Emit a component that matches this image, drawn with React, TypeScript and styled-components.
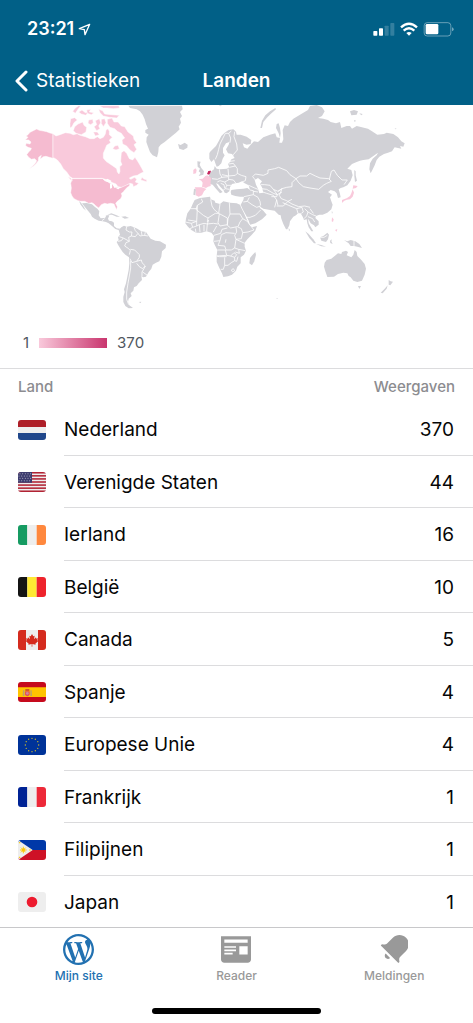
import React from "react";
import styled, { createGlobalStyle } from "styled-components";

const GlobalStyle = createGlobalStyle`
  *, *::before, *::after { box-sizing: border-box; }
  body {
    margin: 0;
    background: #fff;
    color: #060606;
    font-family: Inter, "Liberation Sans", sans-serif;
  }
`;

const Screen = styled.div`
  display: flex;
  flex-direction: column;
  min-height: 100vh;
`;

const Header = styled.header`
  background: #016087;
  color: #fff;
`;

const StatusBar = styled.div`
  display: flex;
  align-items: center;
  justify-content: space-between;
  height: 56px;
  padding: 2px 19px 0 27px;
`;

const Clock = styled.div`
  display: flex;
  align-items: center;
  gap: 4px;
  font-size: 18px;
  line-height: 24px;
  font-weight: 600;
`;

const NavBar = styled.nav`
  display: grid;
  grid-template-columns: 1fr auto 1fr;
  align-items: center;
  height: 49px;
  padding: 0 14px;
`;

const BackButton = styled.button`
  display: flex;
  align-items: center;
  gap: 8px;
  justify-self: start;
  padding: 0;
  border: 0;
  background: none;
  color: inherit;
  font: inherit;
  font-size: 19px;
  line-height: 24px;
  cursor: pointer;
`;

const Title = styled.h1`
  margin: 0;
  font-size: 19px;
  line-height: 24px;
  font-weight: 600;
`;

const MapSection = styled.section`
  padding-bottom: 15px;
  border-bottom: 1px solid #dcdcde;
`;

const MapDrawing = styled.svg`
  display: block;
  width: 100%;
  height: auto;
`;

const Legend = styled.div`
  display: flex;
  align-items: center;
  gap: 10px;
  margin-top: 18px;
  padding-left: 23px;
  color: #50575e;
  font-size: 15px;
  line-height: 20px;
`;

const LegendBar = styled.span`
  width: 68px;
  height: 10px;
  background: linear-gradient(to right, #f9c9db, #c9356e);
`;

const DataTable = styled.table`
  width: 100%;
  border-spacing: 0;
`;

const HeadCell = styled.th<{ $end?: boolean }>`
  height: 34px;
  padding: 2px 18px 0;
  color: #8c8c90;
  font-size: 15px;
  line-height: 20px;
  font-weight: 500;
  text-align: ${(p) => (p.$end ? "right" : "left")};
`;

const Row = styled.tr`
  height: 52px;
  &:nth-child(odd) { height: 53px; }
`;

const FlagCell = styled.td`
  width: 64px;
  padding: 0 0 0 18px;
`;

const NameCell = styled.th`
  padding: 2px 0 0;
  border-bottom: 1px solid #dcdcde;
  font-size: 19px;
  line-height: 24px;
  font-weight: 400;
  text-align: left;
`;

const ValueCell = styled.td`
  padding: 2px 19px 0 0;
  border-bottom: 1px solid #dcdcde;
  font-size: 19px;
  line-height: 24px;
  text-align: right;
`;

const FlagSvg = styled.svg`
  display: block;
  width: 28px;
  height: 20px;
  border-radius: 3px;
`;

const Footer = styled.footer`
  border-top: 1px solid #c8c8ca;
  margin-top: -1px;
  padding-bottom: 9px;
  background: #fff;
`;

const TabList = styled.nav`
  display: grid;
  grid-template-columns: repeat(3, 1fr);
`;

const Tab = styled.button<{ $active?: boolean }>`
  display: flex;
  flex-direction: column;
  align-items: center;
  gap: 3px;
  padding: 5px 0 0;
  border: 0;
  background: none;
  color: ${(p) => (p.$active ? "#2271b1" : "#999")};
  font: inherit;
  font-size: 12px;
  line-height: 16px;
  font-weight: 500;
  cursor: pointer;
`;

const IconSlot = styled.span`
  display: flex;
  align-items: center;
  height: 32px;
`;

const HomeIndicator = styled.div`
  width: 169px;
  height: 6px;
  margin: 24px auto 0;
  border-radius: 3px;
  background: #000;
`;

const GREY = "#d1d1d6";
const PINK = "#f9c9db";
const ROSE = "#f5bbd0";

type Region = { at: [number, number]; fill: string; shapes: string[]; borders?: string[] };

// Each region is drawn on its own sheet at three units per map unit.
const regions: Region[] = [
  {
    at: [20, 100],
    fill: ROSE,
    shapes: [
      "M16,120 26,120 33,126 30,132 18,130 17,137 24,142 34,145 32,150 26,156 20,164 26,172 34,178 44,176 50,182 46,190 38,198 28,206 40,199 48,191 55,182 56,172 64,166 60,178 70,170 78,169 88,172 99,175 99,101 90,99 80,95 70,93 58,91 50,87 38,93 30,97 24,104 18,108 24,112Z",
      "M157,236 248,236 254,242 262,244 270,250 280,254 284,262 300,264 312,256 324,252 330,250 328,258 322,262 314,270 310,276 304,280 306,288 302,296 292,304 287,310 292,320 290,329 286,322 282,312 272,310 262,312 254,310 244,314 236,324 228,318 222,312 216,308 206,310 194,304 182,304 174,302 162,296 156,288 152,278 154,264 152,250Z",
    ],
  },
  {
    at: [20, 100],
    fill: PINK,
    shapes: [
      "M99,101 108,108 120,104 136,98 150,100 160,104 172,101 180,106 196,110 210,116 222,116 232,110 240,116 250,112 256,102 258,90 264,86 268,94 268,104 277,112 268,120 272,128 260,136 256,146 250,160 250,174 258,184 270,192 282,200 290,206 292,216 297,222 300,214 299,200 306,194 302,184 303,170 304,158 312,152 320,160 328,176 338,180 345,172 352,182 358,192 366,206 371,216 362,220 352,226 340,228 328,234 332,238 344,232 350,238 346,246 356,250 350,256 340,260 338,252 330,250 318,256 304,262 294,260 288,252 278,248 262,240 246,235 158,235 150,230 140,216 130,206 122,192 112,180 104,175 99,173Z",
      "M362,240 366,232 372,237 380,239 380,245 372,243Z",
      "M144,230 152,234 157,242 150,238Z",
      "M152,56 164,53 172,60 162,68 156,80 150,84 150,70Z",
      "M164,80 174,72 188,66 192,76 200,82 198,96 184,104 168,100 160,92Z",
      "M158,34 166,24 176,17 182,18 174,28 166,40Z",
      "M176,36 186,30 196,38 204,36 198,46 184,42Z",
      "M200,30 212,28 208,36 222,38 214,44 202,40Z",
      "M238,17 296,17 299,24 280,26 262,24 250,24Z",
      "M236,28 248,32 254,42 274,44 298,46 290,54 268,52 250,48 240,38Z",
      "M206,60 218,58 220,68 212,74 204,70Z",
      "M226,62 238,56 242,68 236,78 240,86 230,92 222,80 230,74Z",
      "M244,58 254,56 258,68 250,80 244,70Z",
      "M220,96 232,96 238,104 226,108Z",
      "M262,58 276,54 282,66 294,66 304,78 314,80 324,96 340,108 342,118 350,128 342,134 350,148 342,158 330,150 320,138 308,132 306,120 314,114 304,100 292,94 284,86 270,82 262,70Z",
      "M284,138 294,136 298,146 288,150 278,146Z",
    ],
  },
  {
    at: [60, 200],
    fill: GREY,
    shapes: [
      "M66,10 80,9 96,13 104,20 112,26 118,34 116,46 122,55 134,54 138,46 148,46 144,56 147,62 156,64 162,68 162,78 170,85 180,86 176,90 166,87 156,78 146,70 138,66 128,64 116,62 104,56 96,50 92,42 82,30 74,20Z",
      "M57,3 63,8 70,18 78,32 70,25 62,14Z",
      "M142,44 154,40 168,45 180,50 170,50 156,44Z",
      "M184,50 196,49 207,54 194,56Z",
      "M176,90 184,82 192,77 200,80 212,78 222,82 232,86 244,94 258,96 266,108 272,116 286,122 300,124 318,134 317,144 306,154 304,170 298,184 288,188 278,194 274,206 266,216 258,230 250,232 244,228 246,240 236,250 230,258 222,262 220,272 212,280 215,288 206,296 204,306 208,316 219,324 206,325 196,318 190,306 190,290 194,276 192,268 198,250 202,230 206,210 208,190 207,172 196,164 188,156 180,144 174,134 170,126 176,120 174,112 180,104Z",
      "M236,306 244,305 242,309Z",
      "M404,0 420,-6 450,-10 452,-2 464,2 466,8 480,12 490,4 510,8 530,10 540,14 544,24 552,40 560,58 568,74 576,82 591,78 586,92 574,106 562,118 554,128 554,140 558,152 552,164 542,172 542,190 532,200 528,212 516,224 504,229 490,231 486,220 478,204 470,186 470,168 472,150 464,134 460,124 462,108 454,98 440,94 424,98 408,98 394,90 384,80 376,70 378,56 382,40 392,26 398,12Z",
      "M570,174 578,164 586,156 588,164 583,184 576,196 568,190Z",
    ],
    borders: [
      "M200,80 198,90 208,96 216,96 214,108 206,112 208,124M174,124 184,122 190,114 178,110M190,114 208,124 198,128 194,138 206,146 211,152 208,164M211,148 224,150 238,164 238,172 230,184 216,188 210,176M230,184 244,180 246,188 256,198 248,206 238,200 230,190M256,198 252,206 246,216 246,228M248,216 262,226M212,182 212,204 208,228 204,250 200,276 200,298 206,314M214,108 226,110 234,100 226,92 222,82M234,100 240,108 252,106 264,108M244,94 246,106M256,96 254,106M138,46 134,54M126,62 134,56",
      "M392,26 412,26 412,16 428,6 424,-4M412,16 408,28 430,46 444,54 442,66M412,26 410,64 384,60M444,54 466,40 476,40M452,-2 456,18 462,28 476,40 480,12M476,40 502,54 502,74 480,78 474,68 478,42M508,8 510,42 540,42M510,42 504,56 502,76 512,84 532,80 544,86M540,42 548,56 540,66 534,80M548,56 562,64 574,80 582,90 564,96 548,98M544,86 548,98 544,116 528,118 524,106 530,96 528,82M376,66 394,70 398,82 390,86M394,70 410,64 410,78 398,82M410,78 418,74 420,96M418,74 432,70 442,72 440,94M442,72 460,70 474,72M442,72 446,60M408,98 406,86M432,74 432,94M460,96 470,78M462,106 482,100 486,88 502,84M462,124 480,122 484,104 498,98 524,100M480,122 474,136 494,138 498,150 514,150 524,144 528,118 554,130M472,150 496,150 500,166 470,168 478,170 500,170M500,166 512,168 522,158 530,164 524,172 512,168M524,144 536,148 556,152M536,148 538,160 526,156M494,172 494,196 504,196 514,188 524,182 524,172M494,196 490,208 482,208M524,182 530,184 534,170M514,210 520,206 524,212 518,216 514,210M496,128 498,118",
    ],
  },
  {
    at: [130, 100],
    fill: GREY,
    shapes: [
      "M-5,17 156,17 158,28 150,36 156,48 150,56 153,68 146,80 149,88 138,98 126,108 114,118 104,126 92,134 86,142 85,156 81,172 68,166 60,156 54,140 49,126 50,112 56,104 46,98 46,90 54,86 48,72 44,58 38,44 30,34 20,28 0,24Z",
      "M144,132 152,135 164,128 173,134 172,143 160,150 148,146Z",
      "M202,184 212,185 209,194 214,204 222,214 220,224 206,228 212,219 206,214 210,206 203,200Z",
      "M240,156 248,148 258,138 266,124 274,108 284,98 296,90 310,88 318,95 320,104 332,104 350,110 364,120 362,132 350,134 338,130 342,142 352,146 362,134 372,124 384,126 400,112 420,104 436,100 440,112 450,114 446,100 438,84 440,72 446,70 450,84 452,100 448,128 456,128 460,118 458,90 464,76 474,78 480,66 490,56 500,50 520,38 534,30 540,18 560,15 576,22 584,34 576,48 564,54 580,56 594,60 602,66 618,70 630,66 634,84 650,78 660,78 666,86 680,78 696,82 714,86 726,94 742,104 762,102 770,98 790,102 804,112 814,124 824,130 820,140 810,138 814,146 804,144 794,142 786,154 774,158 762,162 748,170 740,180 734,196 726,212 722,220 718,208 720,190 728,176 740,166 744,158 730,168 716,178 700,180 690,182 680,186 666,192 658,200 652,206 664,210 668,226 662,242 652,256 640,262 632,264 626,268 630,282 632,292 624,294 620,280 614,274 602,270 594,276 606,284 600,292 604,304 608,314 604,328 592,338 578,344 568,344 558,348 556,354 566,364 566,374 556,382 552,376 542,370 538,362 534,356 536,370 542,380 550,394 544,394 536,382 532,370 530,358 522,360 518,350 512,340 504,340 498,346 490,350 480,364 478,376 472,388 468,388 460,372 454,356 452,346 446,344 440,338 434,332 420,330 408,328 400,326 390,320 386,314 390,324 400,332 410,344 396,358 376,370 360,374 356,362 348,346 338,328 332,314 340,300 342,290 330,290 316,288 304,284 302,276 304,270 320,268 340,266 352,264 360,270 356,256 344,250 336,244 326,248 316,250 306,252 300,262 298,274 290,280 284,278 280,270 272,262 264,252 258,250 266,264 278,276 270,280 258,266 248,254 240,252 236,230 238,222 246,212 252,208 254,198 260,206 270,208 290,206 298,202 294,192 300,186 304,178 314,174 306,162 294,160 288,148 296,134 298,126 288,130 279,144 279,158 284,166 278,176 274,190 266,198 260,200 256,190 252,178 244,186 238,176 238,160Z",
      "M391,84 396,62 406,46 420,34 436,24 438,28 422,42 412,52 400,66 396,84Z",
      "M266,16 276,16 271,19Z",
      "M660,34 672,30 684,34 680,44 664,46Z",
      "M688,40 698,42 694,46Z",
      "M672,60 678,62 674,66Z",
      "M794,85 800,86 796,88Z",
      "M673,210 677,214 677,226 681,242 675,246 673,228Z",
      "M192,266 198,268 196,286 190,284Z",
    ],
    borders: [
      "M304,93 296,100 286,100 278,116 270,132 266,148 262,164 256,178M296,100 302,114 300,128M314,95 312,110 320,132 322,150 310,164 302,178",
      "M268,208 270,222 276,232 262,238 246,236M294,206 296,228 276,224M276,232 296,230 296,240 284,246 270,242 262,246M296,228 316,226 322,220 334,226 348,230 346,242 336,246M298,202 316,198 322,206 322,220M296,192 310,190 316,198M300,184 314,182M296,238 310,240 318,250M284,246 290,256 304,256M290,256 286,266 298,268M286,266 280,270M272,250 282,254 284,264",
      "M356,256 374,264 384,268M360,270 370,272 370,284 342,290M370,284 384,292 390,304 392,316M358,292 352,304 340,306M352,304 366,314 380,322 392,318M370,274 384,276M348,352 360,352 376,346 384,338 392,330",
      "M398,276 410,280 430,286 440,300 444,316M440,300 434,322M440,318 460,318 474,304 486,298",
      "M376,240 368,230 376,222 400,226 414,220 414,210 434,206 446,202 470,212 480,224 498,236 486,248 486,260 470,262 456,266 444,274 430,268 420,256 404,254 392,254",
      "M498,236 510,228 530,228 540,220 556,228 570,234 596,236 604,244 590,250 580,256 566,268 540,264 520,260 506,248ZM598,238 604,214 612,210 622,226 636,240 652,240 642,254",
      "M394,266 410,268 430,280 442,284 456,276M430,268 442,284 440,290 424,290M444,274 456,266 448,286 454,296 470,302 486,312 506,320 524,318 540,322",
      "M458,308 476,316 500,326 516,322 520,336 514,340M500,326 504,340M524,326 534,336 530,348 522,356M534,336 548,344 558,348M540,326 550,340M534,350 548,356 554,366",
    ],
  },
  {
    at: [130, 100],
    fill: "#fff",
    shapes: ["M374,240 384,234 396,244 390,252 396,262 400,278 388,280 384,266 378,254Z"],
  },
  {
    at: [20, 100],
    fill: "#fff",
    shapes: ["M254,242 262,236 274,242 270,248 262,246Z", "M270,252 277,250 276,264 270,266Z", "M280,250 290,256 284,264 279,256Z", "M288,266 300,260 296,268Z"],
  },
  {
    at: [130, 100],
    fill: PINK,
    shapes: [
      "M190,210 196,205 200,210 198,220 190,222Z",
      "M206,238 218,236 226,228 232,226 244,234 242,244 242,258 234,260 228,264 216,260 218,248 214,242Z",
      "M194,262 216,262 229,267 222,274 216,286 206,290 197,286 198,270Z",
      "M670,256 683,258 678,264 668,266Z",
      "M668,268 672,278 668,290 660,298 650,299 640,304 636,308 636,300 650,295 660,288 664,280Z",
      "M606,352 611,358 609,366 605,364Z",
      "M615,390 622,387 620,395Z",
      "M636,300 641,304 637,308Z",
    ],
  },
  {
    at: [130, 100],
    fill: "#c5265f",
    shapes: ["M231,222 235,213 243,212 241,219 237,224Z"],
  },
  {
    at: [240, 200],
    fill: GREY,
    shapes: [
      "M146,84 150,90 147,94Z",
      "M196,94 206,102 220,118 228,130 222,130 208,114Z",
      "M228,132 244,135 258,140 244,139Z",
      "M240,112 250,108 262,98 267,104 264,118 258,126 244,122Z",
      "M270,122 276,118 274,124 278,132 271,129Z",
      "M275,34 278,36 276,42Z",
      "M312,120 322,124 332,120 346,124 358,132 366,144 352,140 342,138 332,138 326,130Z",
      "M254,188 260,180 274,176 284,168 294,160 304,162 306,156 318,152 324,156 320,166 334,172 340,164 344,150 350,156 352,168 362,178 374,192 378,206 374,224 366,242 352,246 340,242 332,232 326,228 322,220 310,218 294,222 282,230 262,231 256,214 252,200Z",
      "M354,258 363,258 358,267Z",
      "M446,240 452,244 459,245 451,256 446,254Z",
      "M443,256 440,266 428,280 422,278 434,266Z",
      "M109,294 114,295 111,297Z",
    ],
    borders: ["M342,120 342,138M240,112 252,112 262,106"],
  },
];

const WorldMap = () => (
  <MapDrawing viewBox="0 105 473 210" role="img" aria-label="Wereldkaart">
    {regions.map((r, i) => (
      <g key={i} transform={`translate(${r.at[0]} ${r.at[1]}) scale(0.33333)`}>
        {r.shapes.map((d) => (
          <path key={d} d={d} fill={r.fill} stroke={i < 2 ? "#fff" : "none"} strokeWidth="1.5" strokeLinejoin="round" />
        ))}
        {r.borders?.map((d) => (
          <path key={d} d={d} fill="none" stroke="#fff" strokeWidth="2.4" strokeLinejoin="round" />
        ))}
      </g>
    ))}
  </MapDrawing>
);

const stripesV = (a: string, b: string, c: string) => (
  <>
    <path fill={a} d="M0 0h28v60H0z" />
    <path fill={b} d="M28 0h28v60H28z" />
    <path fill={c} d="M56 0h28v60H56z" />
  </>
);

const flags: Record<string, React.ReactNode> = {
  nl: (
    <>
      <path fill="#ae1f28" d="M0 0h84v21H0z" />
      <path fill="#eee" d="M0 21h84v18H0z" />
      <path fill="#20478b" d="M0 39h84v21H0z" />
    </>
  ),
  us: (
    <>
      <path fill="#eee" d="M0 0h84v60H0z" />
      {[0, 1, 2, 3, 4, 5, 6].map((n) => (
        <rect key={n} y={n * 9.23} width="84" height="4.62" fill="#b22334" />
      ))}
      <path fill="#3c3b6e" d="M0 0h42v32H0z" />
      {[5, 12, 19, 26].map((y, r) =>
        [6, 14, 22, 30, 38].map((x) => (
          <circle key={`${x}-${y}`} cx={r % 2 ? x - 3 : x} cy={y} r="1.5" fill="#c9c9d8" />
        ))
      )}
    </>
  ),
  ie: stripesV("#169b62", "#eee", "#ff883e"),
  be: stripesV("#141414", "#fee833", "#ee232c"),
  ca: (
    <>
      <path fill="#eee" d="M0 0h84v60H0z" />
      <path fill="#d52b1e" d="M0 0h24v60H0zM60 0h24v60H60z" />
      <path
        fill="#d52b1e"
        d="M42 12l4 7 4-2-2 11 6-6 1 4 5-1-2 6 3 2-9 8 1 3-10-2v8h-2v-8l-10 2 1-3-9-8 3-2-2-6 5 1 1-4 6 6-2-11 4 2z"
      />
    </>
  ),
  es: (
    <>
      <path fill="#c60a1d" d="M0 0h84v60H0z" />
      <path fill="#ffc400" d="M0 16h84v29H0z" />
      <path fill="#bda16a" d="M15 25h4v17h-5zM37 25h4l1 17h-5z" />
      <path fill="#e45058" d="M21 28h14v9q-2 6-7 6t-7-6z" />
      <path fill="#c43a30" d="M22 22h12v4H22z" />
      <circle cx="28" cy="34" r="4" fill="#c98aa0" />
    </>
  ),
  eu: (
    <>
      <path fill="#039" d="M0 0h84v60H0z" />
      {Array.from({ length: 12 }, (_, n) => (
        <circle
          key={n}
          cx={42 + 20 * Math.sin((n * Math.PI) / 6)}
          cy={30 - 20 * Math.cos((n * Math.PI) / 6)}
          r="2"
          fill="#d8c026"
        />
      ))}
    </>
  ),
  fr: stripesV("#002395", "#eee", "#ed2939"),
  ph: (
    <>
      <path fill="#0038a8" d="M0 0h84v30H0z" />
      <path fill="#ce1126" d="M0 30h84v30H0z" />
      <path fill="#eee" d="M0 0l44 30L0 60z" />
      <path stroke="#fcd116" strokeWidth="3" d="M16 20v20M6 30h20M9 23l14 14M23 23L9 37" />
      <circle cx="16" cy="30" r="5" fill="#fcc40a" />
      <path fill="#fcd116" d="M3 6h4v4H3zM3 50h4v4H3zM34 28h4v4h-4z" />
    </>
  ),
  jp: (
    <>
      <path fill="#eee" d="M0 0h84v60H0z" />
      <circle cx="42" cy="30" r="16" fill="#ed1b2f" />
    </>
  ),
};

const countries = [
  { code: "nl", name: "Nederland", views: 370 },
  { code: "us", name: "Verenigde Staten", views: 44 },
  { code: "ie", name: "Ierland", views: 16 },
  { code: "be", name: "België", views: 10 },
  { code: "ca", name: "Canada", views: 5 },
  { code: "es", name: "Spanje", views: 4 },
  { code: "eu", name: "Europese Unie", views: 4 },
  { code: "fr", name: "Frankrijk", views: 1 },
  { code: "ph", name: "Filipijnen", views: 1 },
  { code: "jp", name: "Japan", views: 1 },
];

const LocationIcon = () => (
  <svg width="13" height="13" viewBox="0 0 39 39" fill="none" stroke="#fff" strokeWidth="4" strokeLinejoin="round" aria-hidden="true">
    <path d="M35 4L4 17l15 3 2 15z" />
  </svg>
);

const StatusIcons = () => (
  <svg width="81" height="15" viewBox="1118 63 243 45" aria-hidden="true">
    <g fill="#fff">
      <rect x="1119" y="90" width="12" height="14" rx="2" />
      <rect x="1136" y="82" width="12" height="22" rx="2" />
      <rect x="1153" y="74" width="12" height="30" rx="2" opacity=".2" />
      <rect x="1170" y="66" width="12" height="38" rx="2" opacity=".2" />
      <rect x="1276" y="69" width="38" height="31" rx="4" />
      <path d="M1355 79q5 2 5 6t-5 6z" opacity=".45" />
      <path d="M1226 104l-8-8q8-6 16 0z" />
    </g>
    <rect x="1271.5" y="65" width="80" height="40" rx="9" fill="none" stroke="#fff" strokeWidth="3" opacity=".4" />
    <path d="M1202 79q24-22 48 0M1210 89q16-14 32 0" fill="none" stroke="#fff" strokeWidth="7" />
  </svg>
);

const BackIcon = () => (
  <svg width="14" height="22" viewBox="0 0 14 22" fill="none" stroke="#fff" strokeWidth="3" strokeLinecap="round" strokeLinejoin="round" aria-hidden="true">
    <path d="M12 2L3 11l9 9" />
  </svg>
);

const SiteIcon = () => (
  <svg width="31" height="31" viewBox="2 2 20 20" fill="currentColor" aria-hidden="true">
    <path d="M12 2C6.477 2 2 6.477 2 12s4.477 10 10 10 10-4.477 10-10S17.523 2 12 2zM3.5 12c0-1.232.264-2.402.736-3.46L8.29 19.65C5.456 18.272 3.5 15.365 3.5 12zm8.5 8.5c-.834 0-1.64-.12-2.4-.345l2.55-7.41 2.613 7.157c.017.042.038.08.06.117-.884.31-1.833.48-2.823.48zm1.172-12.485c.512-.027.973-.08.973-.08.458-.055.404-.728-.054-.702 0 0-1.376.108-2.265.108-.835 0-2.24-.107-2.24-.107-.458-.026-.51.674-.053.7 0 0 .434.055.892.082l1.324 3.63-1.86 5.578-3.096-9.208c.512-.027.973-.08.973-.08.458-.055.403-.728-.055-.702 0 0-1.376.108-2.265.108-.16 0-.347-.003-.547-.01C6.418 5.025 9.03 3.5 12 3.5c2.213 0 4.228.846 5.74 2.232-.037-.002-.072-.007-.11-.007-.835 0-1.427.727-1.427 1.51 0 .7.404 1.292.835 1.993.323.566.7 1.293.7 2.344 0 .727-.28 1.572-.646 2.748l-.848 2.833-3.072-9.138zm3.1 11.332l2.597-7.506c.484-1.212.645-2.18.645-3.044 0-.313-.02-.603-.057-.874.664 1.21 1.042 2.6 1.042 4.078 0 3.136-1.7 5.874-4.227 7.347z" />
  </svg>
);

const ReaderIcon = () => (
  <svg width="30" height="27" viewBox="3 4 18 16" fill="currentColor" aria-hidden="true">
    <path d="M3 4v14c0 1.1.9 2 2 2h14c1.1 0 2-.9 2-2V4H3zm7 11H5v-1h5v1zm2-2H5v-1h7v1zm0-2H5v-1h7v1zm7 4h-5v-5h5v5zm0-7H5V6h14v2z" />
  </svg>
);

const BellIcon = () => (
  <svg width="28" height="28" viewBox="3 3 17 18" fill="currentColor" aria-hidden="true">
    <path d="M6.14 14.97l2.828 2.827c-.362.362-.862.586-1.414.586-1.105 0-2-.895-2-2 0-.552.224-1.052.586-1.414zm8.867 5.324L14.3 21 3 9.7l.706-.707 1.102.157c.754.108 1.69-.122 2.077-.51l3.885-3.884c2.34-2.34 6.135-2.34 8.475 0s2.34 6.135 0 8.475l-3.885 3.886c-.388.388-.618 1.323-.51 2.077l.157 1.1z" />
  </svg>
);

export default function App() {
  return (
    <>
      <GlobalStyle />
      <Screen>
        <Header>
          <StatusBar>
            <Clock>
              23:21
              <LocationIcon />
            </Clock>
            <StatusIcons />
          </StatusBar>
          <NavBar>
            <BackButton type="button">
              <BackIcon />
              Statistieken
            </BackButton>
            <Title>Landen</Title>
          </NavBar>
        </Header>
        <main>
          <MapSection>
            <WorldMap />
            <Legend>
              <span>1</span>
              <LegendBar />
              <span>370</span>
            </Legend>
          </MapSection>
          <DataTable>
            <thead>
              <tr>
                <HeadCell scope="col" colSpan={2}>Land</HeadCell>
                <HeadCell scope="col" $end>Weergaven</HeadCell>
              </tr>
            </thead>
            <tbody>
              {countries.map((c) => (
                <Row key={c.code}>
                  <FlagCell>
                    <FlagSvg viewBox="0 0 84 60" preserveAspectRatio="none" aria-hidden="true">
                      {flags[c.code]}
                    </FlagSvg>
                  </FlagCell>
                  <NameCell scope="row">{c.name}</NameCell>
                  <ValueCell>{c.views}</ValueCell>
                </Row>
              ))}
            </tbody>
          </DataTable>
        </main>
        <Footer>
          <TabList>
            <Tab type="button" $active>
              <IconSlot><SiteIcon /></IconSlot>
              Mijn site
            </Tab>
            <Tab type="button">
              <IconSlot><ReaderIcon /></IconSlot>
              Reader
            </Tab>
            <Tab type="button">
              <IconSlot><BellIcon /></IconSlot>
              Meldingen
            </Tab>
          </TabList>
          <HomeIndicator />
        </Footer>
      </Screen>
    </>
  );
}
